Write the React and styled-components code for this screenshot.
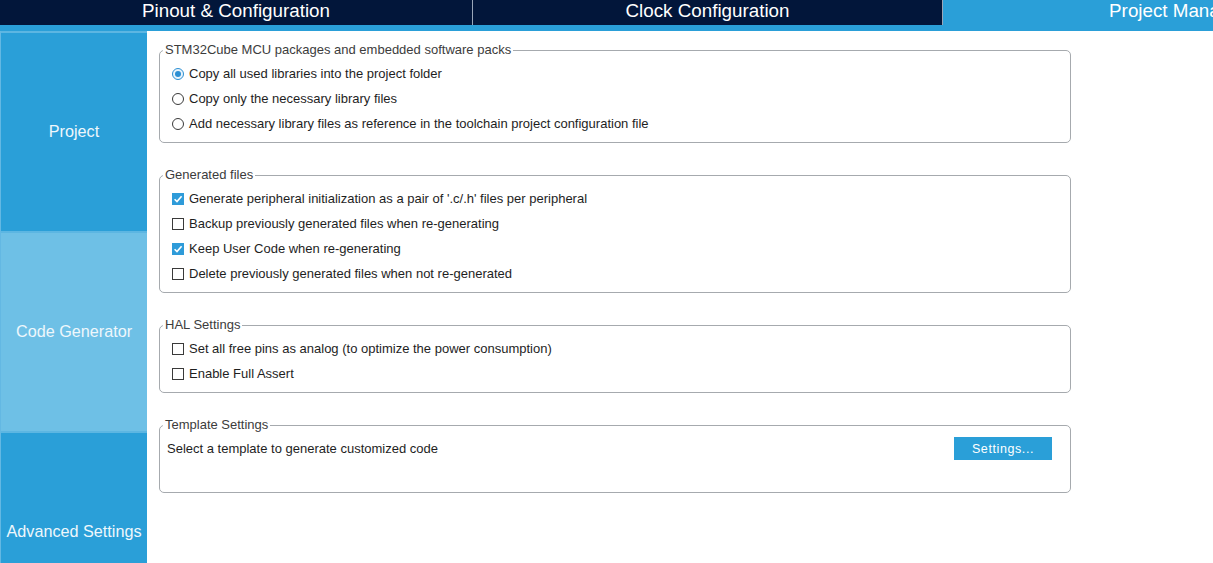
import React from "react";
import styled, { createGlobalStyle, css } from "styled-components";

const Global = createGlobalStyle`
  html, body { margin: 0; padding: 0; background: #ffffff; overflow: hidden; }
  body { font-family: "Liberation Sans", Arial, sans-serif; }
  * { box-sizing: border-box; }
`;

const NAVY = "#02163a";
const BLUE = "#2a9fd8";
const LIGHT = "#6ec0e6";

const Page = styled.div`
  width: 100vw;
  height: 100vh;
  display: flex;
  flex-direction: column;
  overflow: hidden;
`;

const TopBar = styled.div`
  display: flex;
  height: 25px;
  background: ${NAVY};
  flex: none;
`;

const Tab = styled.div`
  flex: none;
  width: ${(p) => p.$w}px;
  height: 25px;
  display: flex;
  align-items: center;
  justify-content: center;
  color: #ffffff;
  font-size: 18.8px;
  line-height: 22px;
  white-space: nowrap;
  padding-bottom: 3px;
  border-right: ${(p) => (p.$sep ? "1px solid #9aa6b8" : "none")};
  background: ${(p) => (p.$active ? BLUE : NAVY)};
`;

const Strip = styled.div`
  height: 6px;
  flex: none;
  background: ${BLUE};
`;

const Body = styled.div`
  flex: 1;
  display: flex;
  min-height: 0;
  overflow: hidden;
`;

const Sidebar = styled.div`
  width: 147px;
  flex: none;
  display: flex;
  flex-direction: column;
  border-left: 1px solid #63b8e3;
`;

const SideItem = styled.div`
  flex: none;
  height: 200px;
  border-top: 2px solid #5cb6e2;
  padding-bottom: 2px;
  background: ${(p) => (p.$light ? LIGHT : BLUE)};
  color: #eef7fc;
  font-size: 16.2px;
  display: flex;
  align-items: center;
  justify-content: center;
  white-space: nowrap;
`;

const Content = styled.div`
  flex: none;
  display: flex;
  flex-direction: column;
  gap: 25px;
  padding: 12px 0 0 12px;
`;

const Group = styled.fieldset`
  margin: 0;
  width: 912px;
  padding: 0;
  border: 1px solid #a6aaae;
  border-radius: 5px;
  min-inline-size: 0;
`;

const Legend = styled.legend`
  margin-left: 3px;
  padding: 0 2px 0 2px;
  font-size: 13px;
  line-height: 14px;
  height: 14px;
  color: #3c3c3c;
`;

const GroupBody = styled.div`
  display: flex;
  flex-direction: column;
  padding: 4px 18px ${(p) => p.$bottom || 6}px ${(p) => p.$left || 12}px;
`;

const Row = styled.label`
  display: flex;
  align-items: center;
  justify-content: ${(p) => (p.$spread ? "space-between" : "flex-start")};
  gap: 5px;
  height: 25px;
  font-size: 13px;
  color: #1e1e1e;
  white-space: nowrap;
`;

const boxBase = css`
  flex: none;
  width: 12px;
  height: 12px;
  display: inline-flex;
  align-items: center;
  justify-content: center;
`;

const Radio = styled.span`
  ${boxBase};
  border-radius: 50%;
  border: 1px solid ${(p) => (p.$on ? "#2b8fd3" : "#3a3a3a")};
  background: ${(p) => (p.$on ? "#eaf4fb" : "#ffffff")};
  &::after {
    content: "";
    display: ${(p) => (p.$on ? "block" : "none")};
    width: 6px;
    height: 6px;
    border-radius: 50%;
    background: #2b8fd3;
  }
`;

const Check = styled.span`
  ${boxBase};
  border: 1px solid ${(p) => (p.$on ? "#2e9bd9" : "#3a3a3a")};
  background: ${(p) => (p.$on ? "#2e9bd9" : "#ffffff")};
`;

const SettingsButton = styled.button`
  width: 98px;
  height: 23px;
  border: none;
  background: ${BLUE};
  color: #ffffff;
  font-family: "Liberation Sans", Arial, sans-serif;
  font-size: 12.5px;
  letter-spacing: 0.6px;
  padding: 0;
  cursor: pointer;
`;

const Tick = () => (
  <svg width="10" height="10" viewBox="0 0 10 10">
    <path d="M1.6 5.2 L4 7.6 L8.6 2.2" fill="none" stroke="#ffffff" strokeWidth="1.6" />
  </svg>
);

const RadioRow = ({ on, children }) => (
  <Row>
    <Radio $on={on} />
    {children}
  </Row>
);

const CheckRow = ({ on, children }) => (
  <Row>
    <Check $on={on}>{on && <Tick />}</Check>
    {children}
  </Row>
);

export default function App() {
  return (
    <Page>
      <Global />
      <TopBar>
        <Tab $w={473} $sep>Pinout &amp; Configuration</Tab>
        <Tab $w={470} $sep>Clock Configuration</Tab>
        <Tab $w={470} $active>Project Manager</Tab>
      </TopBar>
      <Strip />
      <Body>
        <Sidebar>
          <SideItem>Project</SideItem>
          <SideItem $light>Code Generator</SideItem>
          <SideItem>Advanced Settings</SideItem>
        </Sidebar>
        <Content>
          <Group>
            <Legend>STM32Cube MCU packages and embedded software packs</Legend>
            <GroupBody>
              <RadioRow on>Copy all used libraries into the project folder</RadioRow>
              <RadioRow>Copy only the necessary library files</RadioRow>
              <RadioRow>Add necessary library files as reference in the toolchain project configuration file</RadioRow>
            </GroupBody>
          </Group>
          <Group>
            <Legend>Generated files</Legend>
            <GroupBody>
              <CheckRow on>Generate peripheral initialization as a pair of '.c/.h' files per peripheral</CheckRow>
              <CheckRow>Backup previously generated files when re-generating</CheckRow>
              <CheckRow on>Keep User Code when re-generating</CheckRow>
              <CheckRow>Delete previously generated files when not re-generated</CheckRow>
            </GroupBody>
          </Group>
          <Group>
            <Legend>HAL Settings</Legend>
            <GroupBody>
              <CheckRow>Set all free pins as analog (to optimize the power consumption)</CheckRow>
              <CheckRow>Enable Full Assert</CheckRow>
            </GroupBody>
          </Group>
          <Group>
            <Legend>Template Settings</Legend>
            <GroupBody $left={7} $bottom={31}>
              <Row as="div" $spread>
                <span>Select a template to generate customized code</span>
                <SettingsButton>Settings...</SettingsButton>
              </Row>
            </GroupBody>
          </Group>
        </Content>
      </Body>
    </Page>
  );
}
